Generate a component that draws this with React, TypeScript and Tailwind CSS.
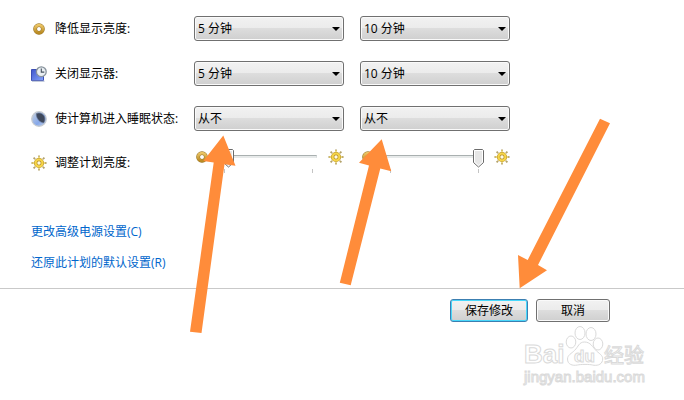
import { useState } from "react";

type IconKind = "dim" | "display" | "sleep" | "sun";

const FIVE = "5 分钟";
const TEN = "10 分钟";
const NEVER = "从不";

const ROWS: { id: string; label: string; icon: IconKind; values: [string, string] }[] = [
  { id: "dim", label: "降低显示亮度:", icon: "dim", values: [FIVE, TEN] },
  { id: "display", label: "关闭显示器:", icon: "display", values: [FIVE, TEN] },
  { id: "sleep", label: "使计算机进入睡眠状态:", icon: "sleep", values: [NEVER, NEVER] },
];

function Icon({ kind }: { kind: IconKind }) {
  return (
    <svg viewBox="0 0 16 16" className="h-4 w-4 shrink-0" aria-hidden="true">
      <defs>
        <linearGradient id="gold" x1="0" y1="0" x2="0" y2="1">
          <stop offset="0" stopColor="#ecc565" />
          <stop offset="1" stopColor="#b98a22" />
        </linearGradient>
        <linearGradient id="screen" x1="0" y1="0" x2="1" y2="1">
          <stop offset="0" stopColor="#3f55cc" />
          <stop offset="1" stopColor="#86a5fa" />
        </linearGradient>
        <linearGradient id="moon" x1="0" y1="0" x2="1" y2="1">
          <stop offset="0" stopColor="#ccd4dc" />
          <stop offset="0.6" stopColor="#86a8ea" />
          <stop offset="1" stopColor="#c9d4e6" />
        </linearGradient>
      </defs>
      {kind === "dim" && (
        <>
          <circle cx="8" cy="8" r="3.9" fill="none" stroke="#98762b" strokeWidth="3.8" />
          <circle cx="8" cy="8" r="3.9" fill="none" stroke="url(#gold)" strokeWidth="2.8" />
        </>
      )}
      {kind === "display" && (
        <>
          <path d="M0.5 3.5h12v11H0.5z" fill="url(#screen)" stroke="#3c4fb5" />
          <path d="M1 15.2h12.5" stroke="#a9b4cc" />
          <circle cx="10.3" cy="5.7" r="4.9" fill="#e9eef2" stroke="#87929c" strokeWidth="1.3" />
          <path d="M10.3 2.6v3.5h3" fill="none" stroke="#47535f" strokeWidth="1.1" />
        </>
      )}
      {kind === "sleep" && (
        <>
          <circle cx="8" cy="8" r="7.3" fill="url(#moon)" stroke="#c6cbd0" strokeWidth="1.2" />
          <path
            d="M5.2 2.6C8.5 0.9 12.7 2.6 13.7 6.2C14.3 8.6 13.7 10.6 12.6 11.9C9.3 11.7 5.2 8.2 5.2 2.6z"
            fill="#3f495c"
            stroke="#6c7c9c"
            strokeWidth="0.6"
          />
        </>
      )}
      {kind === "sun" && (
        <>
          <path
            d="M8 0.5v2M8 13.5v2M0.5 8h2M13.5 8h2M2.6 2.6l1.5 1.5M11.9 11.9l1.5 1.5M2.6 13.4l1.5-1.5M11.9 4.1l1.5-1.5"
            stroke="#b3a26a"
            strokeWidth="1.8"
          />
          <path d="M8 1v2M8 13v1.5M1 8h2M13 8h1.5" stroke="#f6dc62" strokeWidth="0.9" />
          <circle cx="8" cy="8" r="3.4" fill="#fffbe6" stroke="#b8922a" strokeWidth="3.4" />
          <circle cx="8" cy="8" r="3.5" fill="none" stroke="#f6d548" strokeWidth="2.1" />
        </>
      )}
    </svg>
  );
}

function TimeoutSelect({ id, label, initial }: { id: string; label: string; initial: string }) {
  const [value, setValue] = useState(initial);

  return (
    <div className="relative w-[150px]">
      <select
        id={id}
        aria-label={label}
        value={value}
        onChange={(event) => setValue(event.target.value)}
        className="block h-[25px] w-full appearance-none rounded-[3px] border border-[#707070] bg-[linear-gradient(#f2f2f2,#ebebeb_50%,#dddddd_50%,#cfcfcf)] pr-5 pl-[3px] text-xs text-black shadow-[inset_0_0_0_1px_#fafafa]"
      >
        <option>{FIVE}</option>
        <option>{TEN}</option>
        <option>{NEVER}</option>
      </select>
      <svg
        viewBox="0 0 8 4"
        className="pointer-events-none absolute top-[11px] right-1 h-1 w-2"
        aria-hidden="true"
      >
        <path d="M0 0h8L4 4z" fill="#000" />
      </svg>
    </div>
  );
}

function BrightnessSlider({ label, initial }: { label: string; initial: number }) {
  const [value, setValue] = useState(initial);
  // the handle is 10px wide, so its centre travels from 5px to (100% - 5px)
  const left = `calc(${value}% - ${value / 10}px)`;

  return (
    <div className="flex w-[150px] items-start justify-between">
      <Icon kind="dim" />
      <div className="relative mr-[11px] ml-auto h-6 w-[97px]">
        <div className="pt-[6px]">
          <div className="h-[3px] border border-t-[#a9b0b0] border-r-[#d6dada] border-b-[#e7eaea] border-l-[#b0b6b6] bg-[#e7eaea]" />
        </div>
        <div className="flex justify-between px-1 pt-[11px]">
          <span className="h-1 w-px bg-[#c4c4c4]" />
          <span className="h-1 w-px bg-[#c4c4c4]" />
        </div>
        <svg
          viewBox="0 0 11 19"
          className="absolute top-0 h-[19px] w-[11px]"
          style={{ left }}
          aria-hidden="true"
        >
          <path d="M1.5 0.5h8l1 1v12l-5 4.5-5-4.5v-12z" fill="#e6e6e6" stroke="#6b6b6b" />
          <path d="M1.5 1.5h8v11.6l-4 3.6-4-3.6z" fill="none" stroke="#fff" />
        </svg>
        <input
          type="range"
          aria-label={label}
          value={value}
          onChange={(event) => setValue(Number(event.target.value))}
          className="absolute inset-0 h-full w-full cursor-pointer opacity-0"
        />
      </div>
      <Icon kind="sun" />
    </div>
  );
}

function Arrows() {
  return (
    <svg
      width="684"
      height="400"
      viewBox="0 0 684 400"
      className="pointer-events-none absolute top-0 left-0"
      fill="#ff8c3a"
      aria-hidden="true"
    >
      <path d="M223.3 135.5L235.5 165.7 224.5 164.2 201.5 333 190 331.8 213.7 162.4 203.3 161z" />
      <path d="M381.7 139.3L391.3 171.3 380.3 168.4 350.7 285.3 339.8 282.8 369 165.5 359 162.7z" />
      <path d="M519.7 288.3L518 255 527.7 260 600 118.7 610 123.3 538 265 547 270.3z" />
    </svg>
  );
}

function Watermark() {
  return (
    <svg
      width="130"
      height="70"
      viewBox="0 0 130 70"
      className="pointer-events-none absolute top-[322px] right-[34px]"
      fill="#fff"
      stroke="#dadada"
      strokeWidth="1"
      fontFamily="'Liberation Sans', 'Noto Sans CJK SC', sans-serif"
    >
      <text x="4" y="41" fontSize="26" fontWeight="bold">
        Bai
      </text>
      <ellipse cx="60" cy="11" rx="5" ry="6.5" />
      <ellipse cx="71" cy="12" rx="5" ry="6.5" />
      <ellipse cx="51" cy="20" rx="4.8" ry="6" />
      <ellipse cx="78" cy="22" rx="4.8" ry="6" />
      <path d="M64.5 20c6 0 8 5 12 9 4 3.500 7 5 6 9.500-1 4.500-6 5.500-10 4.500-3-.8-12-.8-15 0-5 1-10-.5-10-6 0-4 4-5.500 7-8.500 4-4 4.500-8.500 10-8.500z" />
      <text x="54" y="40" fontSize="17" fontWeight="bold">
        du
      </text>
      <text x="84" y="41" fontSize="20" fontFamily="'Noto Sans CJK SC', sans-serif">
        经验
      </text>
      <text x="4" y="60" fontSize="15">
        jingyan.baidu.com
      </text>
    </svg>
  );
}

export default function App() {
  return (
    <div className="relative min-h-screen overflow-hidden bg-white font-['Open_Sans','Noto_Sans_CJK_SC',sans-serif] text-xs text-black">
      <main className="px-[31px] pt-4">
        <div className="flex flex-col gap-5">
          {ROWS.map((row) => (
            <div key={row.id} className="flex items-center">
              <label htmlFor={`${row.id}-battery`} className="flex w-[163px] items-center gap-2 whitespace-nowrap">
                <Icon kind={row.icon} />
                {row.label}
              </label>
              <div className="flex gap-4">
                <TimeoutSelect id={`${row.id}-battery`} label={`${row.label} 用电池`} initial={row.values[0]} />
                <TimeoutSelect id={`${row.id}-plugged`} label={`${row.label} 接通电源`} initial={row.values[1]} />
              </div>
            </div>
          ))}
          <div className="flex h-6 items-center">
            <div className="flex w-[163px] items-center gap-2 whitespace-nowrap">
              <Icon kind="sun" />
              调整计划亮度:
            </div>
            <div className="flex gap-4 pb-1">
              <BrightnessSlider label="调整计划亮度 用电池" initial={4} />
              <BrightnessSlider label="调整计划亮度 接通电源" initial={100} />
            </div>
          </div>
        </div>

        <div className="flex flex-col items-start gap-[15px] pt-[49px] text-[#0066cc]">
          <a href="#advanced" className="leading-4 hover:underline">
            更改高级电源设置(C)
          </a>
          <a href="#defaults" className="leading-4 hover:underline">
            还原此计划的默认设置(R)
          </a>
        </div>
      </main>

      <footer className="mt-[17px] flex justify-end gap-2 border-t border-[#c9c9c9] pt-[10px] pr-[74px]">
        <button
          type="button"
          className="h-[23px] w-[78px] rounded-[3px] border border-[#3c7fb1] bg-[linear-gradient(#f2f2f2,#ebebeb_50%,#dddddd_50%,#cfcfcf)] shadow-[inset_0_0_0_1px_#48d8fb]"
        >
          保存修改
        </button>
        <button
          type="button"
          className="h-[23px] w-[74px] rounded-[3px] border border-[#707070] bg-[linear-gradient(#f2f2f2,#ebebeb_50%,#dddddd_50%,#cfcfcf)] shadow-[inset_0_0_0_1px_#fafafa]"
        >
          取消
        </button>
      </footer>

      <Watermark />
      <Arrows />
    </div>
  );
}
